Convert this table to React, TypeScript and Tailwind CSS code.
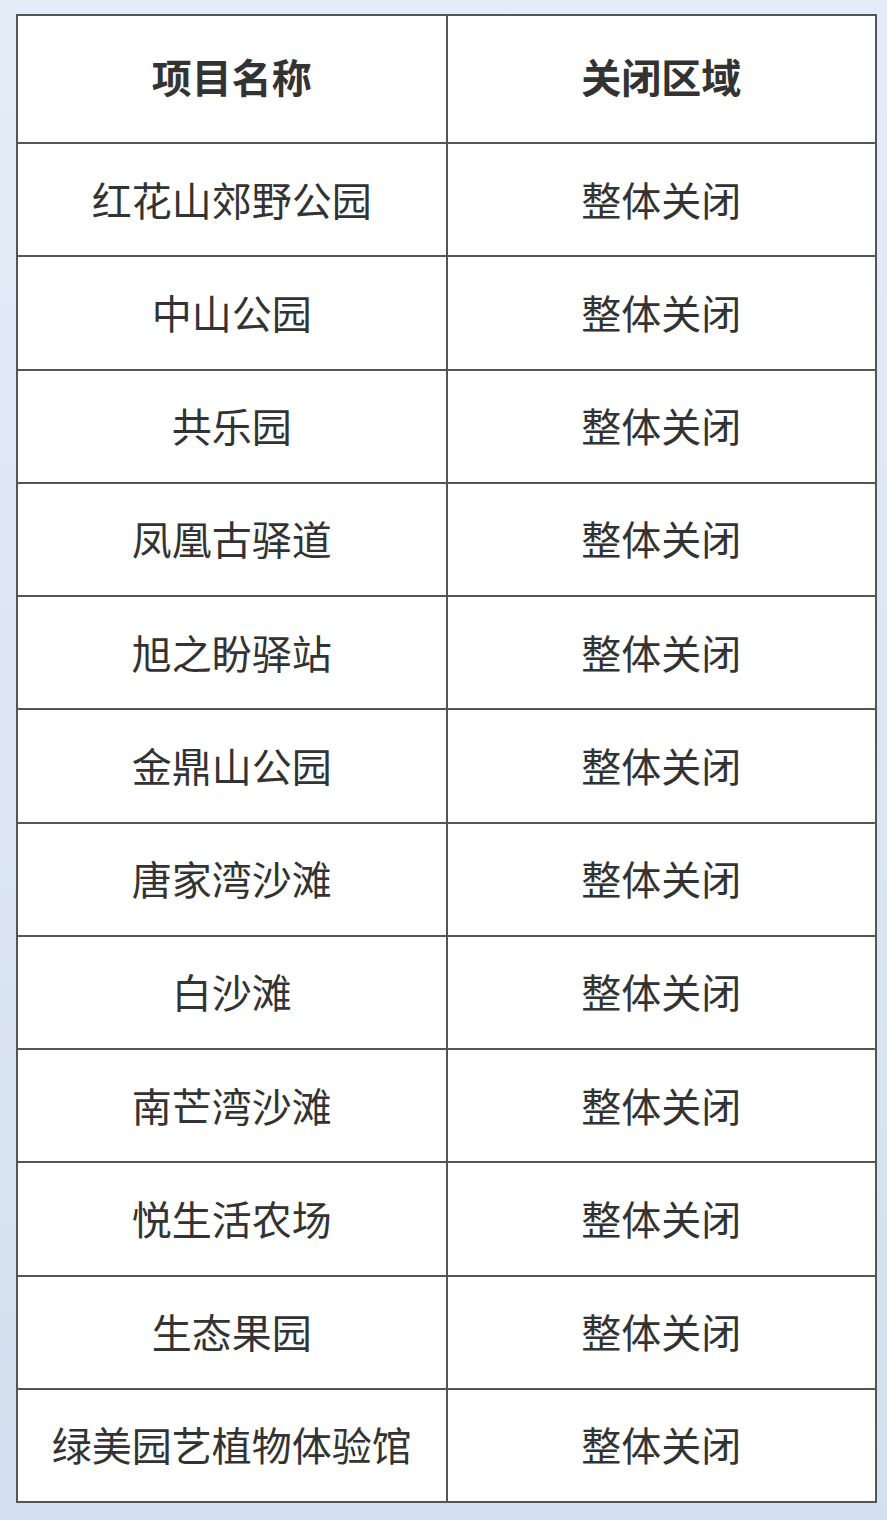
const rows = [
  "红花山郊野公园",
  "中山公园",
  "共乐园",
  "凤凰古驿道",
  "旭之盼驿站",
  "金鼎山公园",
  "唐家湾沙滩",
  "白沙滩",
  "南芒湾沙滩",
  "悦生活农场",
  "生态果园",
  "绿美园艺植物体验馆",
];

export default function App() {
  return (
    <div
      className="w-[887px] h-[1520px] bg-gradient-to-b from-[#e4ecf7] to-[#d4e0ef] pt-[14px] pl-[16px]"
      style={{ fontFamily: '"Noto Sans CJK SC", "Noto Sans", sans-serif' }}
    >
      <table className="w-[861px] border-collapse bg-white text-[#333] table-fixed">
        <thead>
          <tr className="h-[128px]">
            <th className="border-2 border-[#555] text-[40px] leading-none font-bold text-center pb-[6px]">项目名称</th>
            <th className="border-2 border-[#555] text-[40px] leading-none font-bold text-center pb-[6px]">关闭区域</th>
          </tr>
        </thead>
        <tbody>
          {rows.map((name) => (
            <tr key={name} className="h-[113.25px]">
              <td className="border-2 border-[#555] text-[40px] leading-none text-center pb-[2px]">{name}</td>
              <td className="border-2 border-[#555] text-[40px] leading-none text-center pb-[2px]">整体关闭</td>
            </tr>
          ))}
        </tbody>
      </table>
    </div>
  );
}
